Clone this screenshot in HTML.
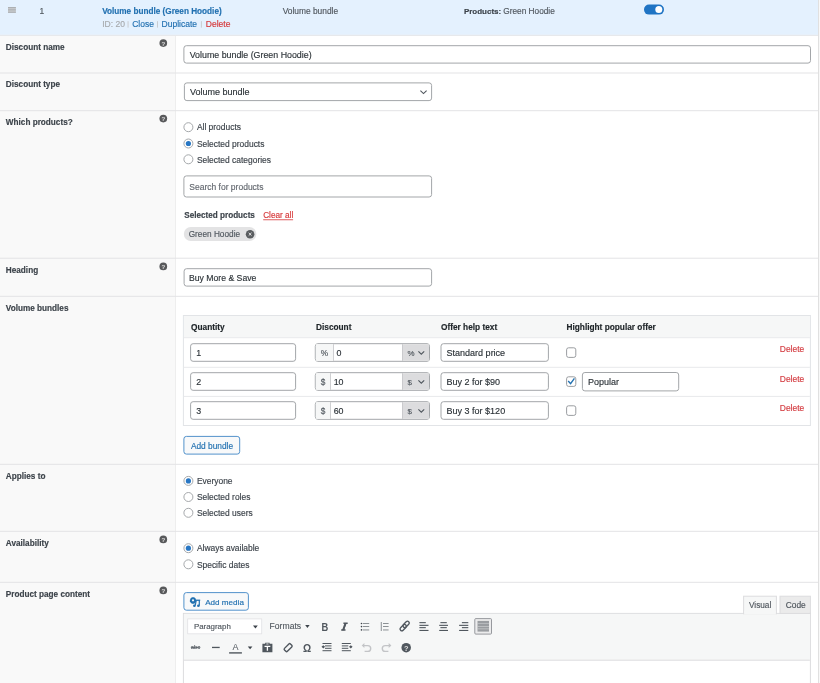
<!DOCTYPE html>
<html><head><meta charset="utf-8">
<style>
*{margin:0;padding:0}
html,body{width:820px;height:683px;overflow:hidden;background:#fff}
svg{position:absolute;left:0;top:0;font-family:"Liberation Sans",sans-serif;will-change:transform}
</style></head><body>
<svg width="820" height="683" viewBox="0 0 820 683">
<rect x="0.00" y="0.00" width="820.00" height="683.00" fill="#ffffff"/>
<rect x="0.00" y="0.00" width="818.00" height="34.80" fill="#e4f1fe"/>
<rect x="0.00" y="34.80" width="818.00" height="1.00" fill="#e2e4e8"/>
<rect x="0.00" y="36.00" width="175.00" height="647.00" fill="#f9f9f9"/>
<rect x="175.00" y="36.00" width="1.00" height="647.00" fill="#eeeeee"/>
<rect x="818.20" y="0.00" width="1.00" height="683.00" fill="#d9d9d9"/>
<rect x="0.00" y="72.50" width="818.00" height="1.00" fill="#e3e3e5"/>
<rect x="0.00" y="110.20" width="818.00" height="1.00" fill="#e3e3e5"/>
<rect x="0.00" y="257.70" width="818.00" height="1.00" fill="#e3e3e5"/>
<rect x="0.00" y="295.80" width="818.00" height="1.00" fill="#e3e3e5"/>
<rect x="0.00" y="463.80" width="818.00" height="1.00" fill="#e3e3e5"/>
<rect x="0.00" y="530.80" width="818.00" height="1.00" fill="#e3e3e5"/>
<rect x="0.00" y="581.80" width="818.00" height="1.00" fill="#e3e3e5"/>
<rect x="8.00" y="7.20" width="7.90" height="5.50" fill="#cdd0d3"/>
<rect x="8.00" y="7.20" width="7.90" height="1.00" fill="#a4a7aa"/>
<rect x="8.00" y="9.40" width="7.90" height="1.00" fill="#a4a7aa"/>
<rect x="8.00" y="11.70" width="7.90" height="1.00" fill="#a4a7aa"/>
<text x="39.50" y="14.00" font-size="8.4" fill="#50575e" stroke="#50575e" stroke-width="0.15">1</text>
<text x="102.20" y="13.70" font-size="8.2" fill="#2271b1" stroke="#2271b1" stroke-width="0.15" font-weight="bold">Volume bundle (Green Hoodie)</text>
<text x="102.20" y="27.00" font-size="8.5" fill="#a7aaad" stroke="#a7aaad" stroke-width="0.15">ID: 20</text>
<rect x="127.60" y="21.20" width="0.90" height="6.40" fill="#c5c7ca"/>
<text x="132.20" y="27.00" font-size="8.5" fill="#2271b1" stroke="#2271b1" stroke-width="0.15">Close</text>
<rect x="157.10" y="21.20" width="0.90" height="6.40" fill="#c5c7ca"/>
<text x="161.60" y="27.00" font-size="8.5" fill="#2271b1" stroke="#2271b1" stroke-width="0.15">Duplicate</text>
<rect x="200.90" y="21.20" width="0.90" height="6.40" fill="#c5c7ca"/>
<text x="205.80" y="27.00" font-size="8.5" fill="#d63638" stroke="#d63638" stroke-width="0.15">Delete</text>
<text x="282.70" y="14.00" font-size="8.4" fill="#50575e" stroke="#50575e" stroke-width="0.15">Volume bundle</text>
<text x="463.90" y="14.00" font-size="8.0" fill="#3c434a" stroke="#3c434a" stroke-width="0.15" font-weight="bold">Products:</text>
<text x="503.30" y="14.00" font-size="8.27" fill="#50575e" stroke="#50575e" stroke-width="0.15">Green Hoodie</text>
<rect x="644.00" y="4.60" width="20.00" height="10.00" rx="5" fill="#1f74c4"/>
<circle cx="658.80" cy="9.60" r="3.50" fill="#fff"/>
<text x="5.85" y="49.50" font-size="8.2" fill="#3c434a" stroke="#3c434a" stroke-width="0.15" font-weight="bold">Discount name</text>
<circle cx="163.30" cy="43.10" r="3.85" fill="#58595b"/>
<text x="163.30" y="45.50" font-size="6.2" fill="#d0d0d0" stroke="#d0d0d0" stroke-width="0.15" font-weight="bold" text-anchor="middle">?</text>
<rect x="183.90" y="45.70" width="626.60" height="17.40" rx="2.5" fill="#fff" stroke="#a3a6a9" stroke-width="1"/>
<text x="189.70" y="57.50" font-size="8.85" fill="#2c3338" stroke="#2c3338" stroke-width="0.15">Volume bundle (Green Hoodie)</text>
<text x="5.85" y="87.40" font-size="8.2" fill="#3c434a" stroke="#3c434a" stroke-width="0.15" font-weight="bold">Discount type</text>
<rect x="184.40" y="82.90" width="247.20" height="17.70" rx="2.5" fill="#fff" stroke="#a3a6a9" stroke-width="1"/>
<text x="189.90" y="95.10" font-size="9.0" fill="#2c3338" stroke="#2c3338" stroke-width="0.15">Volume bundle</text>
<path d="M420.4 90.6 L423.5 93.6 L426.6 90.6" fill="none" stroke="#50575e" stroke-width="1.1"/>
<text x="5.85" y="125.00" font-size="8.2" fill="#3c434a" stroke="#3c434a" stroke-width="0.15" font-weight="bold">Which products?</text>
<circle cx="163.30" cy="118.60" r="3.85" fill="#58595b"/>
<text x="163.30" y="121.00" font-size="6.2" fill="#d0d0d0" stroke="#d0d0d0" stroke-width="0.15" font-weight="bold" text-anchor="middle">?</text>
<circle cx="188.40" cy="127.20" r="4.50" fill="#fff" stroke="#a0a3a6" stroke-width="0.95"/>
<text x="196.90" y="130.40" font-size="8.45" fill="#3c434a" stroke="#3c434a" stroke-width="0.15">All products</text>
<circle cx="188.40" cy="143.50" r="4.50" fill="#fff" stroke="#a0a3a6" stroke-width="0.95"/>
<circle cx="188.40" cy="143.50" r="2.60" fill="#2877c4"/>
<text x="196.90" y="146.70" font-size="8.45" fill="#3c434a" stroke="#3c434a" stroke-width="0.15">Selected products</text>
<circle cx="188.40" cy="159.30" r="4.50" fill="#fff" stroke="#a0a3a6" stroke-width="0.95"/>
<text x="196.90" y="162.50" font-size="8.45" fill="#3c434a" stroke="#3c434a" stroke-width="0.15">Selected categories</text>
<rect x="183.90" y="175.90" width="247.70" height="21.10" rx="2.5" fill="#fff" stroke="#a3a6a9" stroke-width="1"/>
<text x="189.30" y="190.00" font-size="8.5" fill="#646970" stroke="#646970" stroke-width="0.15">Search for products</text>
<text x="184.20" y="218.30" font-size="8.17" fill="#3c434a" stroke="#3c434a" stroke-width="0.15" font-weight="bold">Selected products</text>
<text x="263.20" y="218.30" font-size="8.2" fill="#d63638" stroke="#d63638" stroke-width="0.15">Clear all</text>
<rect x="263.20" y="219.40" width="29.90" height="0.80" fill="#d63638"/>
<rect x="183.80" y="227.00" width="72.60" height="14.10" rx="7" fill="#e3e3e4"/>
<text x="188.70" y="237.20" font-size="8.25" fill="#50575e" stroke="#50575e" stroke-width="0.15">Green Hoodie</text>
<circle cx="250.10" cy="234.20" r="4.30" fill="#5a5d60"/>
<path d="M248.7 232.8 L251.5 235.6 M251.5 232.8 L248.7 235.6" fill="none" stroke="#e8e8e8" stroke-width="1.0"/>
<text x="5.85" y="272.80" font-size="8.2" fill="#3c434a" stroke="#3c434a" stroke-width="0.15" font-weight="bold">Heading</text>
<circle cx="163.30" cy="266.40" r="3.85" fill="#58595b"/>
<text x="163.30" y="268.80" font-size="6.2" fill="#d0d0d0" stroke="#d0d0d0" stroke-width="0.15" font-weight="bold" text-anchor="middle">?</text>
<rect x="184.10" y="268.70" width="247.50" height="17.40" rx="2.5" fill="#fff" stroke="#a3a6a9" stroke-width="1"/>
<text x="188.90" y="281.00" font-size="8.69" fill="#2c3338" stroke="#2c3338" stroke-width="0.15">Buy More &amp; Save</text>
<text x="5.85" y="310.60" font-size="8.2" fill="#3c434a" stroke="#3c434a" stroke-width="0.15" font-weight="bold">Volume bundles</text>
<rect x="183.40" y="315.50" width="627.00" height="110.00" fill="#fff" stroke="#e2e4e7" stroke-width="1"/>
<rect x="183.90" y="316.00" width="626.00" height="21.30" fill="#f6f7f7"/>
<rect x="183.90" y="337.20" width="626.00" height="1.00" fill="#e8e9eb"/>
<rect x="183.90" y="366.80" width="626.00" height="1.00" fill="#e8e9eb"/>
<rect x="183.90" y="395.90" width="626.00" height="1.00" fill="#e8e9eb"/>
<text x="191.10" y="330.40" font-size="8.29" fill="#1d2327" stroke="#1d2327" stroke-width="0.15" font-weight="bold">Quantity</text>
<text x="316.00" y="330.40" font-size="8.29" fill="#1d2327" stroke="#1d2327" stroke-width="0.15" font-weight="bold">Discount</text>
<text x="441.00" y="330.40" font-size="8.29" fill="#1d2327" stroke="#1d2327" stroke-width="0.15" font-weight="bold">Offer help text</text>
<text x="566.50" y="330.40" font-size="8.29" fill="#1d2327" stroke="#1d2327" stroke-width="0.15" font-weight="bold">Highlight popular offer</text>
<rect x="190.60" y="343.70" width="105.00" height="17.60" rx="2.5" fill="#fff" stroke="#a3a6a9" stroke-width="1"/>
<text x="196.20" y="356.00" font-size="8.85" fill="#2c3338" stroke="#2c3338" stroke-width="0.15">1</text>
<rect x="315.30" y="343.70" width="114.20" height="17.60" rx="2.5" fill="#fff" stroke="#a3a6a9" stroke-width="1"/>
<rect x="315.80" y="344.20" width="17.20" height="16.60" fill="#f6f7f7"/>
<rect x="333.00" y="344.20" width="0.80" height="16.60" fill="#c3c4c7"/>
<text x="324.45" y="355.90" font-size="8.3" fill="#50575e" stroke="#50575e" stroke-width="0.15" text-anchor="middle">%</text>
<text x="336.60" y="356.00" font-size="8.85" fill="#2c3338" stroke="#2c3338" stroke-width="0.15">0</text>
<rect x="402.20" y="344.20" width="26.80" height="16.60" fill="#dcdcde"/>
<rect x="402.00" y="344.20" width="0.80" height="16.60" fill="#c3c4c7"/>
<text x="407.40" y="355.90" font-size="7.9" fill="#50575e" stroke="#50575e" stroke-width="0.15">%</text>
<path d="M418.4 351.4 L421.3 354.2 L424.2 351.4" fill="none" stroke="#50575e" stroke-width="1.15"/>
<rect x="441.00" y="343.70" width="107.40" height="17.60" rx="2.5" fill="#fff" stroke="#a3a6a9" stroke-width="1"/>
<text x="446.60" y="356.00" font-size="9.0" fill="#2c3338" stroke="#2c3338" stroke-width="0.15">Standard price</text>
<rect x="566.60" y="347.80" width="9.20" height="9.60" rx="2" fill="#fff" stroke="#8f9296" stroke-width="0.9"/>
<text x="779.80" y="352.10" font-size="8.45" fill="#d43c41" stroke="#d43c41" stroke-width="0.15">Delete</text>
<rect x="190.60" y="372.70" width="105.00" height="17.60" rx="2.5" fill="#fff" stroke="#a3a6a9" stroke-width="1"/>
<text x="196.20" y="385.00" font-size="8.85" fill="#2c3338" stroke="#2c3338" stroke-width="0.15">2</text>
<rect x="315.30" y="372.70" width="114.20" height="17.60" rx="2.5" fill="#fff" stroke="#a3a6a9" stroke-width="1"/>
<rect x="315.80" y="373.20" width="14.30" height="16.60" fill="#f6f7f7"/>
<rect x="330.10" y="373.20" width="0.80" height="16.60" fill="#c3c4c7"/>
<text x="323.00" y="384.90" font-size="8.3" fill="#50575e" stroke="#50575e" stroke-width="0.15" text-anchor="middle">$</text>
<text x="333.70" y="385.00" font-size="8.85" fill="#2c3338" stroke="#2c3338" stroke-width="0.15">10</text>
<rect x="402.20" y="373.20" width="26.80" height="16.60" fill="#dcdcde"/>
<rect x="402.00" y="373.20" width="0.80" height="16.60" fill="#c3c4c7"/>
<text x="407.40" y="384.90" font-size="7.9" fill="#50575e" stroke="#50575e" stroke-width="0.15">$</text>
<path d="M418.4 380.4 L421.3 383.2 L424.2 380.4" fill="none" stroke="#50575e" stroke-width="1.15"/>
<rect x="441.00" y="372.70" width="107.40" height="17.60" rx="2.5" fill="#fff" stroke="#a3a6a9" stroke-width="1"/>
<text x="446.60" y="385.00" font-size="9.0" fill="#2c3338" stroke="#2c3338" stroke-width="0.15">Buy 2 for $90</text>
<rect x="566.60" y="376.80" width="9.20" height="9.60" rx="2" fill="#fff" stroke="#8f9296" stroke-width="0.9"/>
<text x="779.80" y="381.80" font-size="8.45" fill="#d43c41" stroke="#d43c41" stroke-width="0.15">Delete</text>
<path d="M568.2 381.0 L570.6 383.6 L574.4 378.4" fill="none" stroke="#2271b1" stroke-width="1.4"/>
<rect x="582.40" y="372.50" width="96.30" height="18.40" rx="2.5" fill="#fff" stroke="#a3a6a9" stroke-width="1"/>
<text x="588.00" y="385.00" font-size="9.0" fill="#2c3338" stroke="#2c3338" stroke-width="0.15">Popular</text>
<rect x="190.60" y="401.70" width="105.00" height="17.60" rx="2.5" fill="#fff" stroke="#a3a6a9" stroke-width="1"/>
<text x="196.20" y="414.00" font-size="8.85" fill="#2c3338" stroke="#2c3338" stroke-width="0.15">3</text>
<rect x="315.30" y="401.70" width="114.20" height="17.60" rx="2.5" fill="#fff" stroke="#a3a6a9" stroke-width="1"/>
<rect x="315.80" y="402.20" width="14.30" height="16.60" fill="#f6f7f7"/>
<rect x="330.10" y="402.20" width="0.80" height="16.60" fill="#c3c4c7"/>
<text x="323.00" y="413.90" font-size="8.3" fill="#50575e" stroke="#50575e" stroke-width="0.15" text-anchor="middle">$</text>
<text x="333.70" y="414.00" font-size="8.85" fill="#2c3338" stroke="#2c3338" stroke-width="0.15">60</text>
<rect x="402.20" y="402.20" width="26.80" height="16.60" fill="#dcdcde"/>
<rect x="402.00" y="402.20" width="0.80" height="16.60" fill="#c3c4c7"/>
<text x="407.40" y="413.90" font-size="7.9" fill="#50575e" stroke="#50575e" stroke-width="0.15">$</text>
<path d="M418.4 409.4 L421.3 412.2 L424.2 409.4" fill="none" stroke="#50575e" stroke-width="1.15"/>
<rect x="441.00" y="401.70" width="107.40" height="17.60" rx="2.5" fill="#fff" stroke="#a3a6a9" stroke-width="1"/>
<text x="446.60" y="414.00" font-size="9.0" fill="#2c3338" stroke="#2c3338" stroke-width="0.15">Buy 3 for $120</text>
<rect x="566.60" y="405.80" width="9.20" height="9.60" rx="2" fill="#fff" stroke="#8f9296" stroke-width="0.9"/>
<text x="779.80" y="410.80" font-size="8.45" fill="#d43c41" stroke="#d43c41" stroke-width="0.15">Delete</text>
<rect x="183.90" y="436.40" width="55.80" height="17.70" rx="2.5" fill="#f8f9fa" stroke="#4a8cc8" stroke-width="0.95"/>
<text x="190.90" y="448.70" font-size="8.34" fill="#2271b1" stroke="#2271b1" stroke-width="0.15">Add bundle</text>
<text x="5.85" y="478.50" font-size="8.2" fill="#3c434a" stroke="#3c434a" stroke-width="0.15" font-weight="bold">Applies to</text>
<circle cx="188.40" cy="480.90" r="4.50" fill="#fff" stroke="#a0a3a6" stroke-width="0.95"/>
<circle cx="188.40" cy="480.90" r="2.60" fill="#2877c4"/>
<text x="196.90" y="484.10" font-size="8.45" fill="#3c434a" stroke="#3c434a" stroke-width="0.15">Everyone</text>
<circle cx="188.40" cy="497.00" r="4.50" fill="#fff" stroke="#a0a3a6" stroke-width="0.95"/>
<text x="196.90" y="500.20" font-size="8.45" fill="#3c434a" stroke="#3c434a" stroke-width="0.15">Selected roles</text>
<circle cx="188.40" cy="512.80" r="4.50" fill="#fff" stroke="#a0a3a6" stroke-width="0.95"/>
<text x="196.90" y="516.00" font-size="8.45" fill="#3c434a" stroke="#3c434a" stroke-width="0.15">Selected users</text>
<text x="5.85" y="546.00" font-size="8.2" fill="#3c434a" stroke="#3c434a" stroke-width="0.15" font-weight="bold">Availability</text>
<circle cx="163.30" cy="539.40" r="3.85" fill="#58595b"/>
<text x="163.30" y="541.80" font-size="6.2" fill="#d0d0d0" stroke="#d0d0d0" stroke-width="0.15" font-weight="bold" text-anchor="middle">?</text>
<circle cx="188.40" cy="548.20" r="4.50" fill="#fff" stroke="#a0a3a6" stroke-width="0.95"/>
<circle cx="188.40" cy="548.20" r="2.60" fill="#2877c4"/>
<text x="196.90" y="551.40" font-size="8.45" fill="#3c434a" stroke="#3c434a" stroke-width="0.15">Always available</text>
<circle cx="188.40" cy="564.30" r="4.50" fill="#fff" stroke="#a0a3a6" stroke-width="0.95"/>
<text x="196.90" y="567.50" font-size="8.45" fill="#3c434a" stroke="#3c434a" stroke-width="0.15">Specific dates</text>
<text x="5.85" y="597.00" font-size="8.2" fill="#3c434a" stroke="#3c434a" stroke-width="0.15" font-weight="bold">Product page content</text>
<circle cx="163.30" cy="590.40" r="3.85" fill="#58595b"/>
<text x="163.30" y="592.80" font-size="6.2" fill="#d0d0d0" stroke="#d0d0d0" stroke-width="0.15" font-weight="bold" text-anchor="middle">?</text>
<rect x="183.90" y="592.60" width="64.50" height="17.60" rx="2.5" fill="#f8f9fa" stroke="#4a8cc8" stroke-width="0.95"/>
<text x="205.20" y="604.50" font-size="8.1" fill="#2271b1" stroke="#2271b1" stroke-width="0.15">Add media</text>
<rect x="183.40" y="613.40" width="627.00" height="80.00" fill="#fff" stroke="#dcdcde" stroke-width="1"/>
<rect x="183.90" y="613.90" width="626.00" height="46.00" fill="#f6f7f7"/>
<rect x="183.90" y="659.70" width="626.00" height="1.00" fill="#dcdcde"/>
<rect x="187.70" y="618.90" width="74.00" height="14.90" fill="#fff" stroke="#e2e2e4" stroke-width="0.8"/>
<rect x="743.60" y="596.20" width="32.80" height="17.60" fill="#f6f7f7" stroke="#dcdcde" stroke-width="1"/>
<rect x="744.10" y="611.00" width="31.80" height="3.50" fill="#f6f7f7"/>
<text x="749.00" y="608.00" font-size="8.24" fill="#50575e" stroke="#50575e" stroke-width="0.15">Visual</text>
<rect x="780.00" y="596.20" width="30.40" height="17.20" fill="#ebebeb" stroke="#dcdcde" stroke-width="1"/>
<text x="785.70" y="608.00" font-size="8.4" fill="#50575e" stroke="#50575e" stroke-width="0.15">Code</text>
 <!-- add media icon -->
 <g fill="#2271b1">
  <path d="M190.6 598.4 l1.3-1.2 h2.3 l1.3 1.2 l0.6 1.6 v1.2 l-0.6 1.4 l-1.3 1.1 h-2.3 l-1.3 -1.1 l-0.7 -1.4 v-1.2z"/>
  <rect x="195.3" y="599.6" width="4.9" height="1.3"/>
  <path d="M195.6 600.4 h1.2 l-1 5 h-1.2z"/>
  <rect x="198.7" y="600.2" width="1.2" height="5.4"/>
  <ellipse cx="194.4" cy="605.8" rx="1.35" ry="1.2"/>
  <ellipse cx="198.4" cy="605.7" rx="1.35" ry="1.2"/>
 </g>
 <circle cx="193" cy="600.3" r="1.1" fill="#f8f9fa"/>
 <text x="193.9" y="629.3" font-size="7.92" fill="#50575e" stroke="#50575e" stroke-width="0.15">Paragraph</text>
 <text x="269.6" y="628.8" font-size="8.6" fill="#50575e" stroke="#50575e" stroke-width="0.12">Formats</text>
 <!-- toolbar row1 -->
 <path d="M253 625.4 h4.8 l-2.4 3.1z" fill="#3c434a"/>
 <path d="M305.2 624.9 h4.4 l-2.2 3.2z" fill="#3c434a"/>
 <text transform="translate(321.6,630.7) scale(0.9,1.1)" font-weight="bold" font-size="10.4" fill="#50575e">B</text>
 <g fill="none" stroke="#50575e" stroke-width="1.4">
  <path d="M343.4 623.2 h4.3 M341.2 630 h4.3 M345.9 623.2 l-2.5 6.8"/>
 </g>
 <path d="M344.6 623 h1.9 l-2.6 7.2 h-1.9z" fill="#50575e"/>
 <g fill="#3c434a">
  <circle cx="361.5" cy="623.5" r="0.8"/><circle cx="361.5" cy="626.6" r="0.8"/><circle cx="361.5" cy="629.9" r="0.8"/>
 </g>
 <g fill="#80858a">
  <rect x="363" y="623.1" width="6.2" height="0.9"/>
  <rect x="363" y="626.1" width="6.2" height="0.9"/>
  <rect x="363" y="629.5" width="6.2" height="0.9"/>
  <rect x="380.8" y="622" width="0.9" height="9"/>
  <rect x="383" y="623.1" width="5.6" height="0.9"/><rect x="383" y="626.1" width="5.6" height="0.9"/><rect x="383" y="629.5" width="5.6" height="0.9"/>
 </g>
 <g fill="none" stroke="#50575e" stroke-width="1.35">
  <rect x="399.5" y="625.8" width="7.4" height="3.6" rx="1.8" transform="rotate(-45 403.2 627.6)"/>
  <rect x="402.4" y="622.6" width="7.4" height="3.6" rx="1.8" transform="rotate(-45 406.1 624.4)"/>
 </g>
 <g fill="#50575e">
  <rect x="419.4" y="622.1" width="6.4" height="1.1"/><rect x="419.4" y="624.8" width="9.1" height="1.1"/><rect x="419.4" y="627.1" width="6.4" height="1.1"/><rect x="419.4" y="629.9" width="9.1" height="1.1"/>
  <rect x="440.4" y="622.1" width="6.4" height="1.1"/><rect x="439.2" y="624.8" width="8.8" height="1.1"/><rect x="440.4" y="627.1" width="6.4" height="1.1"/><rect x="439.2" y="629.9" width="8.8" height="1.1"/>
  <rect x="461.9" y="622.1" width="6.4" height="1.1"/><rect x="459.1" y="624.8" width="9.2" height="1.1"/><rect x="461.9" y="627.1" width="6.4" height="1.1"/><rect x="459.1" y="629.9" width="9.2" height="1.1"/>
 </g>
 <rect x="474.8" y="618.6" width="16.7" height="15.5" rx="1" fill="#ececed" stroke="#8c8f94" stroke-width="0.9"/>
 <rect x="477.5" y="620.9" width="11.5" height="10.7" fill="#9a9da1"/>
 <g fill="#d5d6d8">
  <rect x="477.5" y="623.3" width="11.5" height="0.5"/>
  <rect x="477.5" y="626.0" width="11.5" height="0.6"/>
  <rect x="477.5" y="628.6" width="11.5" height="0.6"/>
 </g>
 <!-- toolbar row2 -->
 <text x="191.1" y="649.1" font-weight="bold" font-size="5" fill="#50575e" textLength="9" lengthAdjust="spacingAndGlyphs">abc</text>
 <rect x="190.8" y="646.9" width="9.6" height="0.8" fill="#50575e"/>
 <rect x="212" y="646.8" width="7.7" height="1.3" fill="#50575e"/>
 <text x="235.5" y="650.2" font-size="9" fill="#50575e" text-anchor="middle">A</text>
 <rect x="229.1" y="652.2" width="12.8" height="1.4" fill="#50575e"/>
 <path d="M247.8 646.4 h4.6 l-2.3 2.9z" fill="#3c434a"/>
 <path d="M262.4 643.8 h2.8 v-1.1 h4.4 v1.1 h2.8 v8.4 h-10z" fill="#50575e"/>
 <rect x="266.3" y="643.4" width="2.2" height="1.1" fill="#dcdcde"/>
 <path d="M264.5 645.8 h5.8 v1.3 h-2.25 v3.7 h-1.3 v-3.7 h-2.25z" fill="#fff"/>
 <rect x="283.9" y="645.6" width="8.4" height="4.1" rx="1.1" transform="rotate(-45 288.1 647.6)" fill="none" stroke="#50575e" stroke-width="1.4"/>
 <text x="307" y="651.9" font-size="10.2" font-weight="bold" fill="#50575e" text-anchor="middle">&#937;</text>
 <g fill="#50575e">
  <rect x="322.5" y="643" width="9" height="1"/><rect x="325" y="645.4" width="6.5" height="1"/><rect x="325" y="647.8" width="6.5" height="1"/><rect x="322.5" y="650.2" width="9" height="1"/>
  <path d="M321.5 646.8 l1.8 -1.6 l1.8 1.6 l-1.8 1.6z"/>
  <rect x="341.8" y="643" width="9" height="1"/><rect x="341.8" y="645.4" width="6.5" height="1"/><rect x="341.8" y="647.8" width="6.5" height="1"/><rect x="341.8" y="650.2" width="9" height="1"/>
  <path d="M349 646.8 l1.8 -1.6 l1.8 1.6 l-1.8 1.6z"/>
 </g>
 <g fill="none" stroke="#c3c4c7" stroke-width="1.4">
  <path d="M363.6 645.6 h4.2 a2.9 2.9 0 0 1 0 5.8 h-3.2"/>
  <path d="M389.4 645.6 h-4.2 a2.9 2.9 0 0 0 0 5.8 h3.2"/>
 </g>
 <path d="M361.7 645.6 l2.7 -2.5 v5z" fill="#c3c4c7"/>
 <path d="M391.4 645.6 l-2.7 -2.5 v5z" fill="#c3c4c7"/>
 <circle cx="406.2" cy="647.7" r="4.75" fill="#50575e"/>
 <text x="406.2" y="650.5" text-anchor="middle" font-weight="bold" font-size="7.4" fill="#e0e0e0">?</text>

</svg>
</body></html>
